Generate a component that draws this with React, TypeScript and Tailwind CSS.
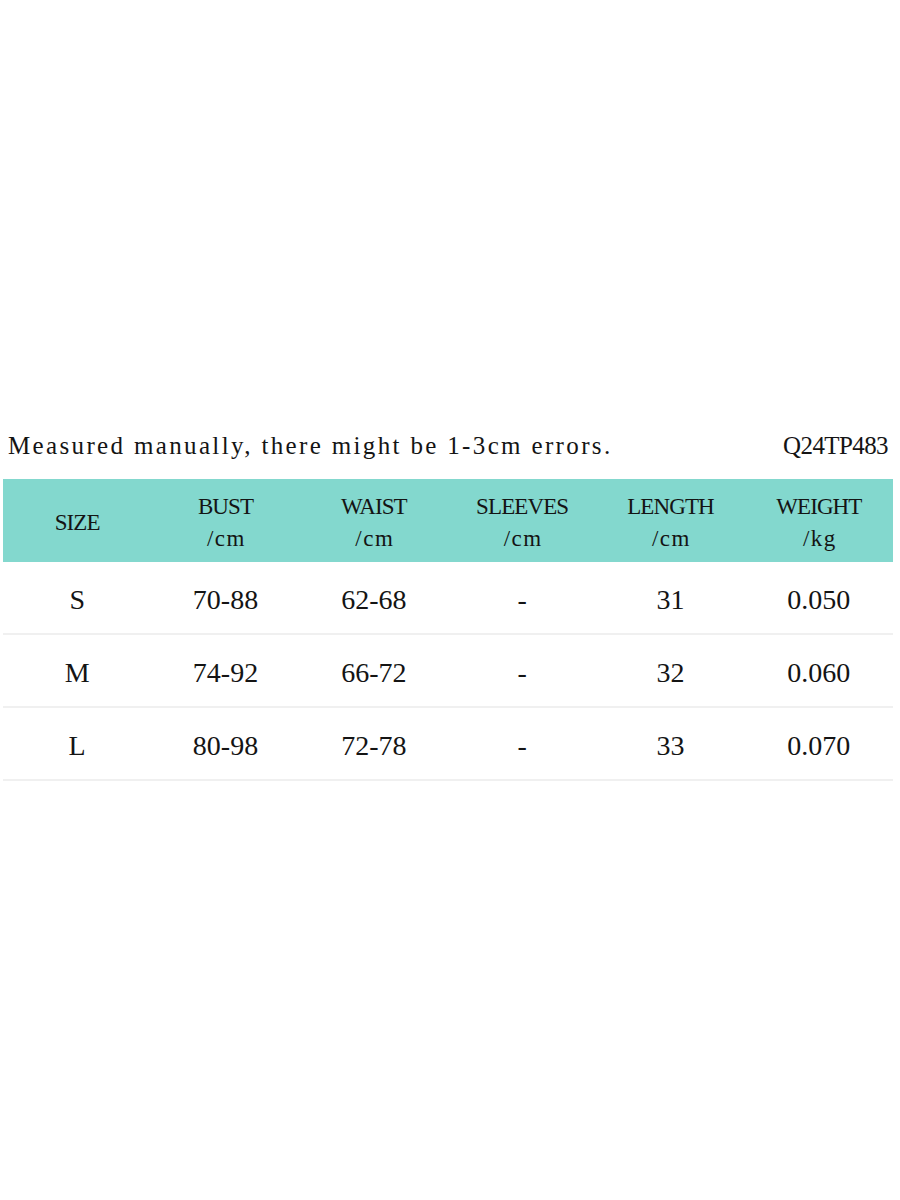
const headers: [string, string | null][] = [
  ['SIZE', null],
  ['BUST', '/cm'],
  ['WAIST', '/cm'],
  ['SLEEVES', '/cm'],
  ['LENGTH', '/cm'],
  ['WEIGHT', '/kg'],
];

const rows: string[][] = [
  ['S', '70-88', '62-68', '-', '31', '0.050'],
  ['M', '74-92', '66-72', '-', '32', '0.060'],
  ['L', '80-98', '72-78', '-', '33', '0.070'],
];

const serif = "font-['Liberation_Serif','DejaVu_Serif',serif]";

export default function App() {
  return (
    <div className={`h-[1200px] w-[900px] bg-white pt-[430px] text-[#141414] ${serif}`}>
      <div className="flex h-[32px] items-center justify-between pl-[8px] pr-[12px] text-[25px]">
        <span className="tracking-[2.35px]">Measured manually, there might be 1-3cm errors.</span>
        <span className="tracking-[-0.6px]">Q24TP483</span>
      </div>

      <div className="ml-[3px] mt-[17px] w-[890px]">
        <div className="grid h-[83px] grid-cols-6 items-center bg-[#83d8ce] pt-[4px] text-[23px] leading-[32px] tracking-[-0.9px]">
          {headers.map(([title, unit]) => (
            <div key={title} className="flex flex-col items-center">
              <span>{title}</span>
              {unit && <span className="pl-[2px] tracking-[1.5px]">{unit}</span>}
            </div>
          ))}
        </div>

        {rows.map((r) => (
          <div
            key={r[0]}
            className="grid h-[73px] grid-cols-6 items-center border-b-2 border-[#f0f0f0] pt-[4px] text-[28px]"
          >
            {r.map((v, i) => (
              <div key={i} className="text-center">
                {v}
              </div>
            ))}
          </div>
        ))}
      </div>
    </div>
  );
}
